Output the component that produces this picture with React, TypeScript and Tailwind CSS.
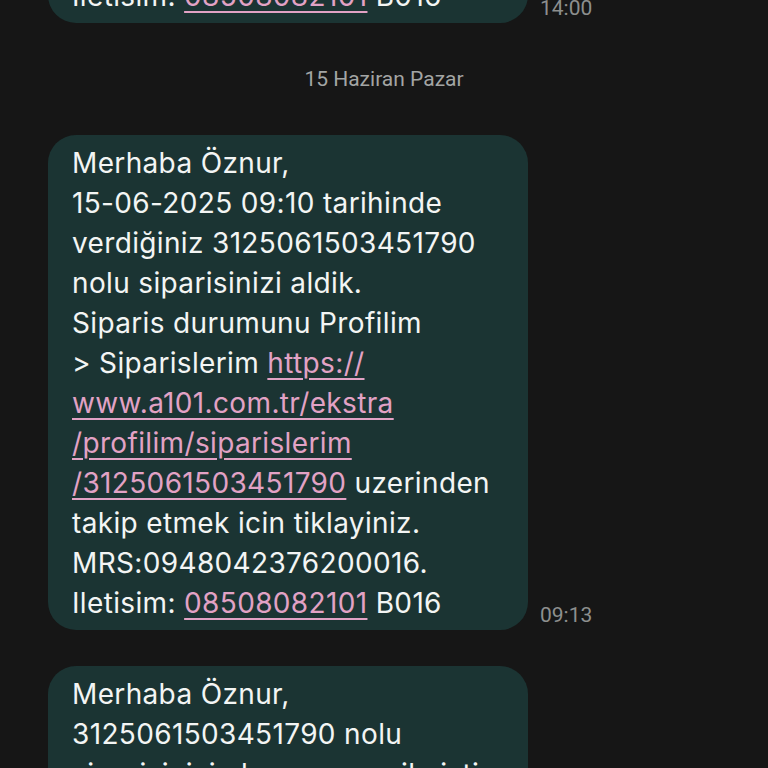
import React from 'react';

type Part = { text: string; link?: boolean };
type Line = Part[];

interface Message {
  lines: Line[];
  time: string;
}

const t = (text: string): Part => ({ text });
const l = (text: string): Part => ({ text, link: true });

const previous: Message = {
  time: '14:00',
  lines: [
    [t('takip etmek icin tiklayiniz.')],
    [t('MRS:0948042376200016.')],
    [t('Iletisim: '), l('08508082101'), t(' B016')],
  ],
};

const order: Message = {
  time: '09:13',
  lines: [
    [t('Merhaba Öznur,')],
    [t('15-06-2025 09:10 tarihinde')],
    [t('verdiğiniz 3125061503451790')],
    [t('nolu siparisinizi aldik.')],
    [t('Siparis durumunu Profilim')],
    [t('> Siparislerim '), l('https://')],
    [l('www.a101.com.tr/ekstra')],
    [l('/profilim/siparislerim')],
    [l('/3125061503451790'), t(' uzerinden')],
    [t('takip etmek icin tiklayiniz.')],
    [t('MRS:0948042376200016.')],
    [t('Iletisim: '), l('08508082101'), t(' B016')],
  ],
};

const next: Message = {
  time: '',
  lines: [
    [t('Merhaba Öznur,')],
    [t('3125061503451790 nolu')],
    [t('siparisinizin kargoya verilmistir.')],
  ],
};

function Bubble({ msg, className = '' }: { msg: Message; className?: string }) {
  return (
    <div className={`flex items-end gap-3 ${className}`}>
      <div
        className="w-[480px] shrink-0 rounded-[28px] bg-[#1b3433] pl-6 pr-4 pt-[8px] pb-[7px] text-[28px] leading-[40px] tracking-[0.35px] text-[#f3f5f4] whitespace-nowrap overflow-hidden"
        style={{ fontFamily: 'Inter, Roboto, sans-serif' }}
      >
        {msg.lines.map((line, i) => (
          <div key={i}>
            {line.map((p, j) =>
              p.link ? (
                <span key={j} className="text-[#e2a2c5] underline decoration-[2px] underline-offset-[5px]">
                  {p.text}
                </span>
              ) : (
                <span key={j}>{p.text}</span>
              )
            )}
          </div>
        ))}
      </div>
      <div className="pb-[1px] text-[21px] leading-[28px] text-[#8d8f8e]">{msg.time}</div>
    </div>
  );
}

export default function App() {
  return (
    <div
      className="h-[768px] w-[768px] overflow-hidden bg-[#161616]"
      style={{ fontFamily: 'Roboto, "Noto Sans", sans-serif' }}
    >
      <div className="flex flex-col pl-12">
        <Bubble msg={previous} className="-mt-[112px]" />
        <div className="mt-[42px] mb-[42px] -ml-12 text-center text-[21px] leading-[28px] text-[#a3a5a4]">
          15 Haziran Pazar
        </div>
        <Bubble msg={order} />
        <Bubble msg={next} className="mt-[36px]" />
      </div>
    </div>
  );
}
